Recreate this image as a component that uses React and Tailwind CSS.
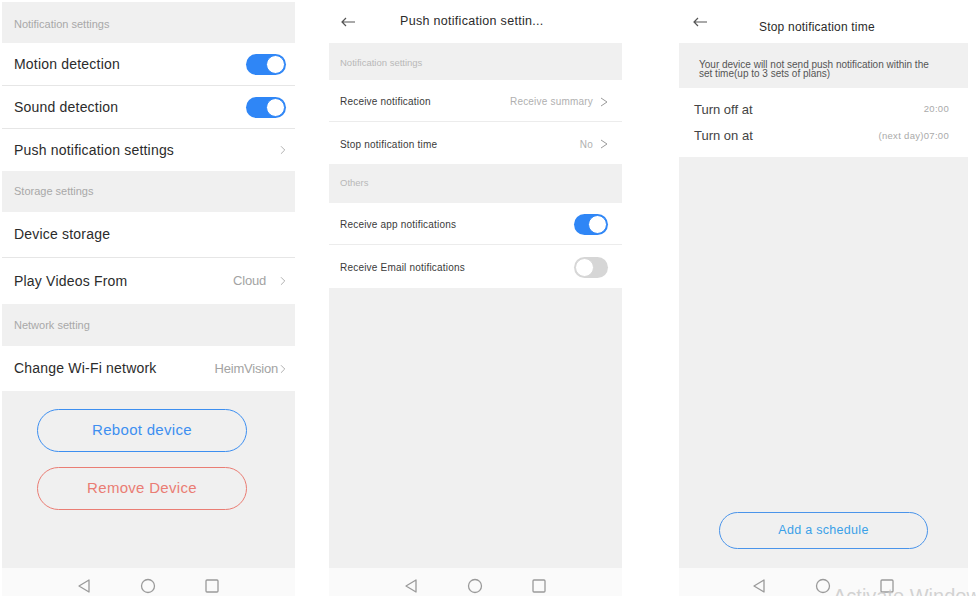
import { ChevronRight } from 'lucide-react'

const FONT = { fontFamily: '"Liberation Sans", Arial, sans-serif' }

function Toggle({ on, big }) {
  const size = big ? 'w-[40px] h-[21px]' : 'w-[34px] h-[21px]'
  return (
    <span
      className={`${size} rounded-full flex items-center px-[1px] ${
        on ? 'bg-[#2f86f6] justify-end' : 'bg-[#d6d6d6] justify-start'
      }`}
    >
      <span
        className={`w-[19px] h-[19px] rounded-full bg-white border ${
          on ? 'border-[#2f86f6]' : 'border-[#d6d6d6]'
        }`}
      />
    </span>
  )
}

function NavBar() {
  return (
    <div className="h-[28px] bg-[#fafafa] flex items-center justify-center gap-[48px] pt-[8px] pr-[2px]">
      <svg width="16" height="16" viewBox="0 0 16 16" fill="none" stroke="#9a9a9a" strokeWidth="1.3">
        <path d="M13 2 L3 8 L13 14 Z" strokeLinejoin="round" />
      </svg>
      <svg width="16" height="16" viewBox="0 0 16 16" fill="none" stroke="#9a9a9a" strokeWidth="1.3">
        <circle cx="8" cy="8" r="6.5" />
      </svg>
      <svg width="16" height="16" viewBox="0 0 16 16" fill="none" stroke="#9a9a9a" strokeWidth="1.3">
        <rect x="2" y="2" width="12" height="12" rx="1" />
      </svg>
    </div>
  )
}

function BackArrow() {
  return (
    <svg width="15" height="10" viewBox="0 0 15 10" fill="none" stroke="#555" strokeWidth="1.2">
      <path d="M14 5 H1 M5 1 L1 5 L5 9" />
    </svg>
  )
}

/* ───── Screen 1: device settings ───── */
function GroupLabel({ children, h, pt = '' }) {
  return (
    <div className={`${h} ${pt} bg-[#f0f0f0] flex items-center px-[12px] text-[11px] text-[#a8a8a8]`}>
      {children}
    </div>
  )
}

function Row1({ label, value, gap = '', chevron, toggle, h, border }) {
  return (
    <div
      className={`${h} bg-white flex items-center justify-between pl-[12px] ${toggle ? 'pr-[9px]' : 'pr-[5px]'} ${
        border ? 'border-b border-[#e6e6e6]' : ''
      }`}
    >
      <span className="text-[14px] text-[#2b2b2b] tracking-[0.2px]">{label}</span>
      <span className="flex items-center">
        {value && <span className={`text-[13px] text-[#a3a3a3] tracking-[-0.2px] ${gap}`}>{value}</span>}
        {chevron && <ChevronRight size={14} strokeWidth={1.2} color="#8f8f8f" />}
        {toggle && <Toggle on big />}
      </span>
    </div>
  )
}

function DeviceSettings() {
  return (
    <div className="w-[293px] h-[596px] flex flex-col pt-[2px]">
      <GroupLabel h="h-[41px]" pt="pt-[3px]">Notification settings</GroupLabel>
      <Row1 h="h-[43px]" label="Motion detection" toggle border />
      <Row1 h="h-[43px]" label="Sound detection" toggle border />
      <Row1 h="h-[42px]" label="Push notification settings" chevron />
      <GroupLabel h="h-[41px]">Storage settings</GroupLabel>
      <Row1 h="h-[46px]" label="Device storage" border />
      <Row1 h="h-[46px]" label="Play Videos From" value="Cloud" gap="mr-[10px]" chevron />
      <GroupLabel h="h-[42px]">Network setting</GroupLabel>
      <Row1 h="h-[45px]" label="Change Wi-Fi network" value="HeimVision" gap="-mr-[2px]" chevron />
      <div className="flex-1 bg-[#f0f0f0] flex flex-col items-center gap-[15px] pt-[18px] pr-[13px]">
        <button className="w-[210px] h-[43px] rounded-full border-[1.5px] border-[#3d8ff0] text-[#3d8ff0] text-[15px] tracking-[0.3px]">
          Reboot device
        </button>
        <button className="w-[210px] h-[43px] rounded-full border-[1.5px] border-[#ea7d74] text-[#ea7d74] text-[15px] tracking-[0.3px]">
          Remove Device
        </button>
      </div>
      <NavBar />
    </div>
  )
}

/* ───── Screen 2: push notification settings ───── */
function Row2({ label, value, toggle, on, border, h = 'h-[42px]' }) {
  return (
    <div
      className={`${h} bg-white flex items-center justify-between pl-[11px] pr-[14px] pt-[2px] ${
        border ? 'border-b border-[#ececec]' : ''
      }`}
    >
      <span className="text-[10px] text-[#3a3a3a] tracking-[0.2px]">{label}</span>
      {toggle ? (
        <Toggle on={on} />
      ) : (
        <span className="flex items-center text-[10px] text-[#b0b0b0] tracking-[0.2px]">
          {value}
          <svg width="8" height="10" viewBox="0 0 8 10" fill="none" stroke="#9a9a9a" strokeWidth="1" className="ml-[7px]">
            <path d="M1 1 L7 5 L1 9" />
          </svg>
        </span>
      )}
    </div>
  )
}

function PushSettings() {
  return (
    <div className="w-[293px] h-[596px] flex flex-col">
      <div className="h-[43px] bg-white flex items-center pl-[12px]">
        <BackArrow />
        <span className="ml-[44px] text-[12.5px] text-[#2b2b2b] tracking-[0.3px]">Push notification settin...</span>
      </div>
      <div className="h-[37px] pt-[3px] bg-[#f0f0f0] flex items-center px-[11px] text-[9.5px] text-[#b8b8b8]">
        Notification settings
      </div>
      <Row2 label="Receive notification" value="Receive summary" border />
      <Row2 label="Stop notification time" value="No" />
      <div className="h-[39px] bg-[#f0f0f0] flex items-center px-[11px] text-[9.5px] text-[#b8b8b8]">Others</div>
      <Row2 label="Receive app notifications" toggle on border />
      <Row2 label="Receive Email notifications" toggle h="h-[43px]" />
      <div className="flex-1 bg-[#f0f0f0]" />
      <NavBar />
    </div>
  )
}

/* ───── Screen 3: stop notification time ───── */
function StopTime() {
  return (
    <div className="w-[289px] h-[596px] flex flex-col">
      <div className="h-[43px] bg-white flex items-center pl-[14px] pt-[10px]">
        <span className="-mt-[10px]">
          <BackArrow />
        </span>
        <span className="ml-[51px] text-[12px] text-[#2b2b2b] tracking-[0.2px]">Stop notification time</span>
      </div>
      <div className="h-[45px] bg-[#f0f0f0] flex items-center pl-[20px] pr-[30px] pt-[6px] text-[10px] leading-[9px] text-[#555]">
        Your device will not send push notification within the set time(up to 3 sets of plans)
      </div>
      <div className="h-[69px] bg-white flex flex-col justify-center gap-[7px] pl-[15px] pr-[19px]">
        <div className="flex items-center justify-between">
          <span className="text-[13px] text-[#444]">Turn off at</span>
          <span className="text-[9.5px] text-[#aaa] tracking-[0.3px]">20:00</span>
        </div>
        <div className="flex items-center justify-between">
          <span className="text-[13px] text-[#444]">Turn on at</span>
          <span className="text-[9.5px] text-[#aaa] tracking-[0.3px]">(next day)07:00</span>
        </div>
      </div>
      <div className="flex-1 bg-[#f0f0f0] flex flex-col justify-end items-center pb-[19px]">
        <button className="w-[209px] h-[37px] rounded-full border border-[#4a94ea] text-[#3aa0e8] text-[12.5px] tracking-[0.3px]">
          Add a schedule
        </button>
      </div>
      <NavBar />
    </div>
  )
}

export default function App() {
  return (
    <div className="relative w-[978px] h-[596px] bg-white overflow-hidden flex pl-[2px]" style={FONT}>
      <DeviceSettings />
      <div className="ml-[34px]">
        <PushSettings />
      </div>
      <div className="ml-[57px]">
        <StopTime />
      </div>
      {/* Windows activation watermark */}
      <span className="absolute left-[833px] top-[581px] text-[20px] text-[#c8c8c8]/80 whitespace-nowrap">
        Activate Windows
      </span>
    </div>
  )
}
